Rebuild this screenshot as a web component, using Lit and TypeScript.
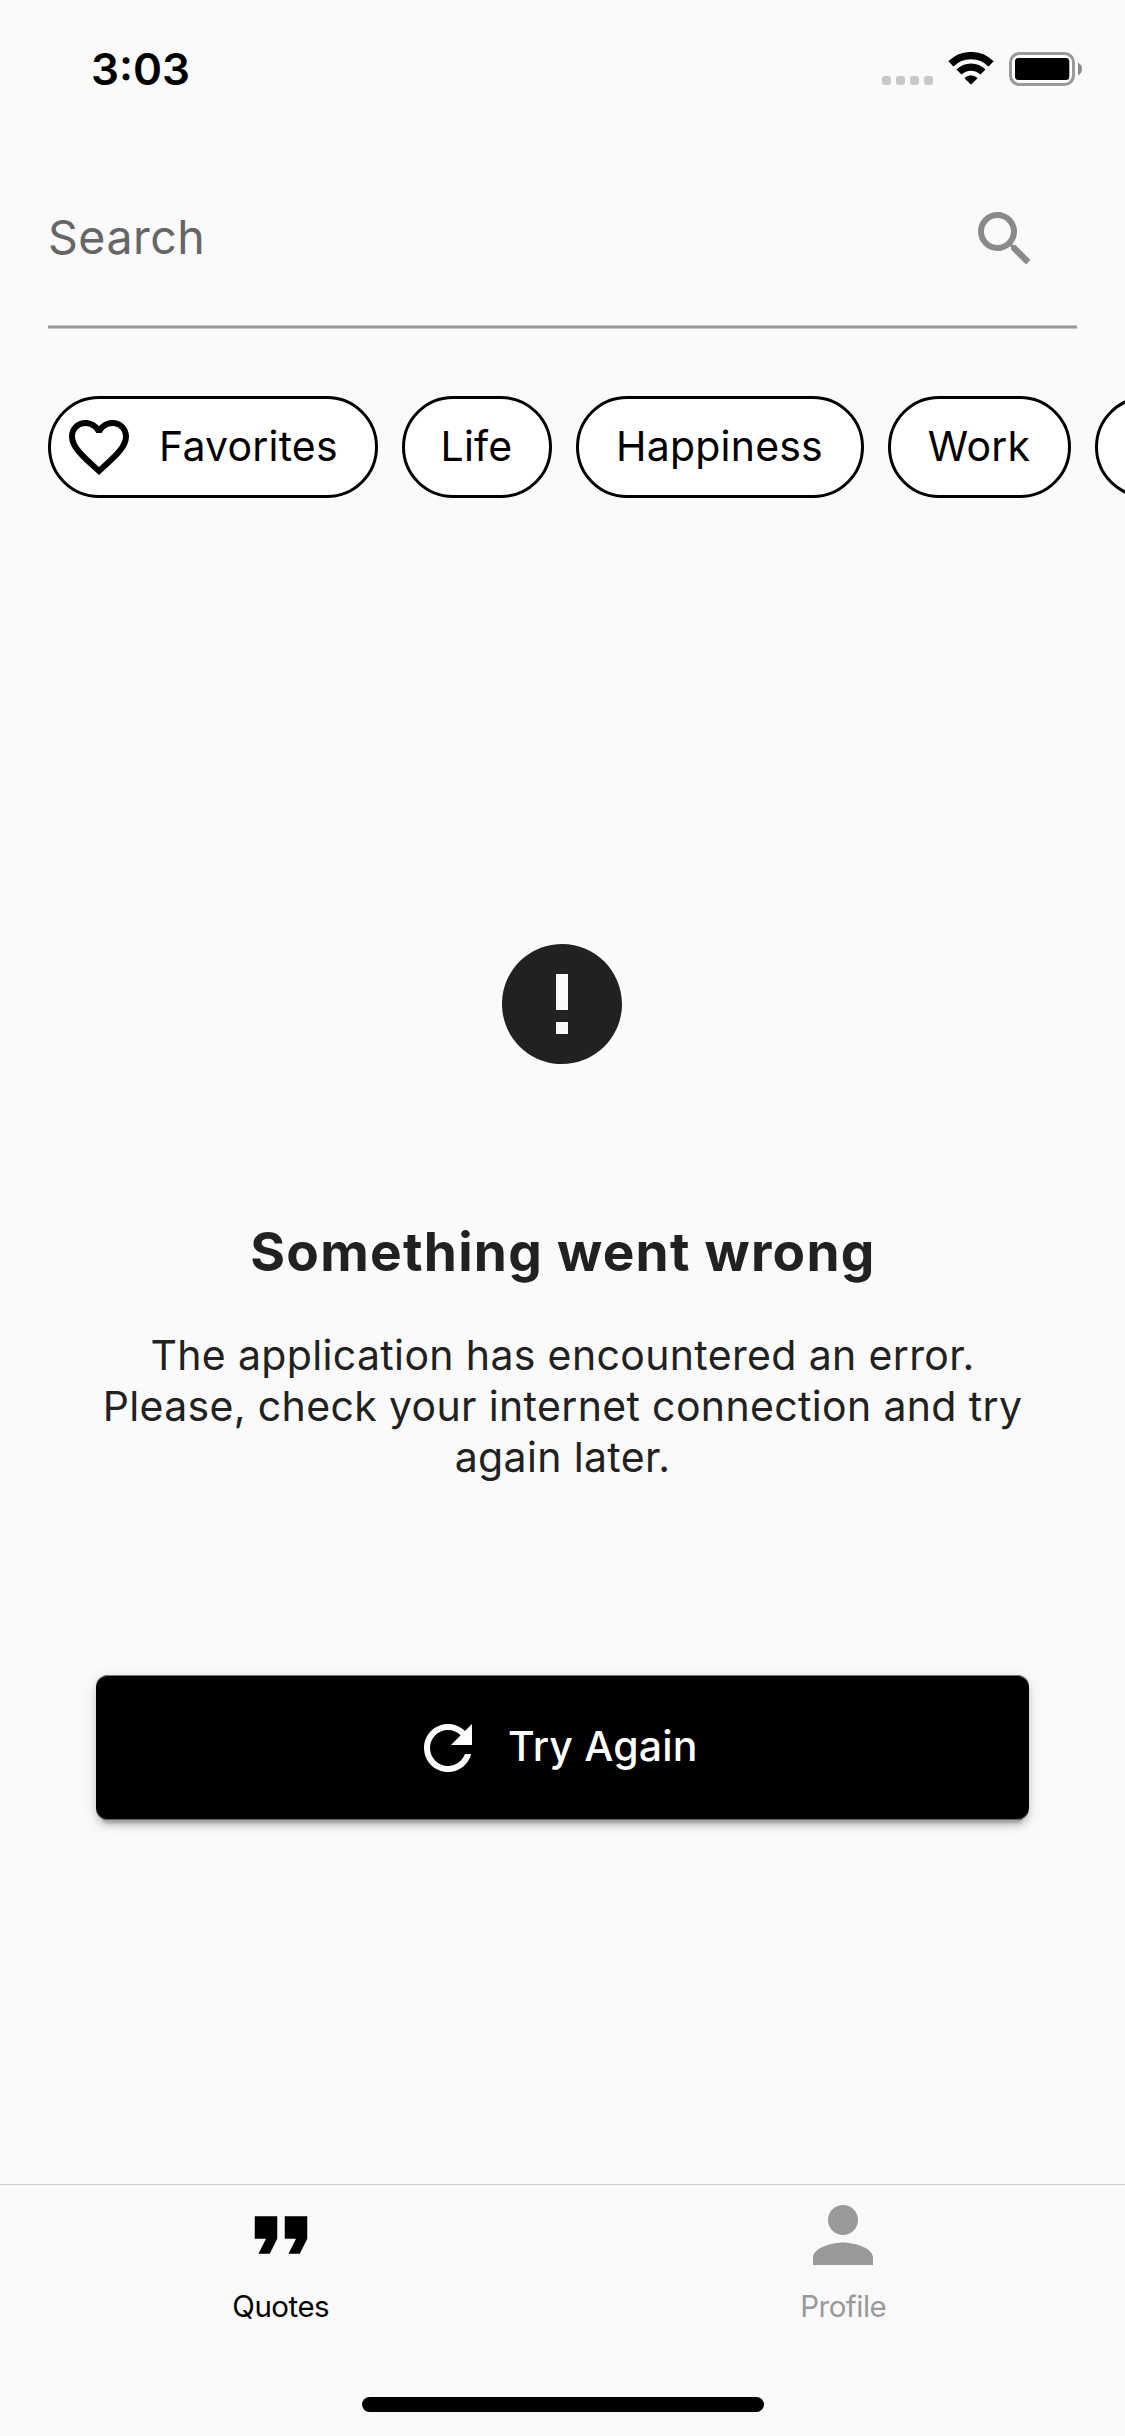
import { LitElement, html, css, svg } from "lit";
import { customElement, property } from "lit/decorators.js";

const ICONS: Record<string, string> = {
  search:
    "M15.5 14h-.79l-.28-.27A6.471 6.471 0 0 0 16 9.5 6.5 6.5 0 1 0 9.5 16c1.61 0 3.09-.59 4.23-1.57l.27.28v.79l5 4.99L20.49 19l-4.99-5zm-6 0C7.01 14 5 11.99 5 9.5S7.01 5 9.5 5 14 7.01 14 9.5 11.99 14 9.5 14z",
  heart:
    "M16.5 3c-1.74 0-3.41.81-4.5 2.09C10.91 3.81 9.24 3 7.5 3 4.42 3 2 5.42 2 8.5c0 3.78 3.4 6.86 8.55 11.54L12 21.35l1.45-1.32C18.6 15.36 22 12.28 22 8.5 22 5.42 19.58 3 16.5 3zm-4.4 15.55l-.1.1-.1-.1C7.14 14.24 4 11.39 4 8.5 4 6.5 5.5 5 7.5 5c1.54 0 3.04.99 3.57 2.36h1.87C13.46 5.99 14.96 5 16.5 5c2 0 3.5 1.5 3.5 3.5 0 2.89-3.14 5.74-7.9 10.05z",
  error:
    "M12 2C6.48 2 2 6.48 2 12s4.48 10 10 10 10-4.48 10-10S17.52 2 12 2zm1 15h-2v-2h2v2zm0-4h-2V7h2v6z",
  refresh:
    "M17.65 6.35C16.2 4.9 14.21 4 12 4c-4.42 0-7.99 3.58-7.99 8s3.57 8 7.99 8c3.73 0 6.84-2.55 7.73-6h-2.08c-.82 2.33-3.04 4-5.65 4-3.31 0-6-2.69-6-6s2.69-6 6-6c1.66 0 3.14.69 4.22 1.78L13 11h7V4l-2.35 2.35z",
  quote: "M6 17h3l2-4V7H5v6h3zm8 0h3l2-4V7h-6v6h3z",
  person:
    "M12 12c2.21 0 4-1.79 4-4s-1.79-4-4-4-4 1.79-4 4 1.79 4 4 4zm0 2c-2.67 0-8 1.34-8 4v2h16v-2c0-2.66-5.33-4-8-4z",
};

@customElement("app-icon")
export class AppIcon extends LitElement {
  static styles = css`
    :host {
      display: block;
      flex: none;
      width: 72px;
      height: 72px;
    }
    .glyph {
      display: block;
      width: 100%;
      height: 100%;
      fill: currentColor;
    }
  `;
  @property() name = "";
  render() {
    return html`<svg class="glyph" viewBox="0 0 24 24" aria-hidden="true">${svg`<path d=${ICONS[this.name]}></path>`}</svg>`;
  }
}

@customElement("status-bar")
export class StatusBar extends LitElement {
  static styles = css`
    :host {
      display: flex;
      justify-content: space-between;
      box-sizing: border-box;
      height: 150px;
      padding: 44px 43px 0 91px;
    }
    .time {
      font-size: 44px;
      font-weight: 600;
      line-height: 50px;
      letter-spacing: 0;
      color: #000;
    }
    .indicators {
      display: flex;
      align-items: flex-start;
      padding-top: 8px;
    }
    .dots {
      display: flex;
      gap: 5px;
      margin: 24px 15px 0 0;
    }
    .dot {
      width: 9px;
      height: 9px;
      border-radius: 3px;
      background: #c8c8c8;
    }
    .wifi {
      display: block;
      width: 46px;
      height: 34px;
      margin-right: 15px;
    }
    .battery {
      display: block;
      width: 73px;
      height: 34px;
    }
  `;
  render() {
    return html`
      <span class="time">3:03</span>
      <div class="indicators">
        <div class="dots">${[0, 1, 2, 3].map(() => html`<i class="dot"></i>`)}</div>
        <svg class="wifi" viewBox="0 0 46 34" aria-hidden="true">
          <path d="M2.9 11.9A28.4 28.4 0 0 1 43.1 11.9" fill="none" stroke="#000" stroke-width="7.2" />
          <path d="M11 20A17 17 0 0 1 35 20" fill="none" stroke="#000" stroke-width="7.2" />
          <path d="M16.9 26.200Q23 21.500 29.1 26.200L23 32.2z" stroke="#000" stroke-linejoin="round" stroke-width="1" />
        </svg>
        <svg class="battery" viewBox="0 0 73 34" aria-hidden="true">
          <rect x="1.5" y="1.5" width="63" height="31" rx="9" fill="#fefefe" stroke="#999" stroke-width="3" />
          <rect x="6" y="6" width="54.3" height="22" rx="3.5" fill="#000" />
          <path d="M69 10.7c5.3 2 5.3 10.6 0 12.6z" fill="#888" />
        </svg>
      </div>
    `;
  }
}

interface Category {
  label: string;
  width: number;
  icon?: string;
}

@customElement("category-chips")
export class CategoryChips extends LitElement {
  static styles = css`
    :host {
      display: flex;
      gap: 24px;
      padding: 67px 0 0 48px;
      overflow: hidden;
    }
    .chip {
      display: flex;
      flex: none;
      align-items: center;
      justify-content: center;
      box-sizing: border-box;
      height: 102px;
      border: 3px solid #000;
      border-radius: 51px;
      background: #fff;
      color: #000;
    }
    .with-icon {
      justify-content: flex-start;
      padding-left: 12px;
      gap: 24px;
    }
    .label {
      font-size: 41px;
      line-height: 50px;
      letter-spacing: 0.2px;
      padding: 0 1px 2px 0;
      white-space: nowrap;
    }
  `;
  private categories: Category[] = [
    { label: "Favorites", width: 330, icon: "heart" },
    { label: "Life", width: 150 },
    { label: "Happiness", width: 288 },
    { label: "Work", width: 183 },
    { label: "", width: 160 },
  ];
  render() {
    return this.categories.map(
      (c) => html`<div class="chip ${c.icon ? "with-icon" : ""}" style="width:${c.width}px">
        ${c.icon ? html`<app-icon name=${c.icon}></app-icon>` : ""}
        <span class="label">${c.label}</span>
      </div>`
    );
  }
}

@customElement("tab-bar")
export class TabBar extends LitElement {
  static styles = css`
    :host {
      display: flex;
      flex-direction: column;
      align-items: center;
      box-sizing: border-box;
      height: 252px;
      border-top: 1px solid #cecece;
      background: #f9f9f9;
    }
    .tabs {
      display: grid;
      grid-template-columns: 1fr 1fr;
      width: 100%;
      height: 212px;
    }
    .tab {
      display: flex;
      flex-direction: column;
      align-items: center;
      padding: 5px 1px 0 0;
      color: #999;
    }
    .active {
      color: #000;
    }
    .tab-icon {
      width: 90px;
      height: 90px;
    }
    .tab-label {
      margin-top: 8px;
      font-size: 29.5px;
      line-height: 36px;
      letter-spacing: -0.5px;
    }
    .home {
      width: 402px;
      height: 15px;
      border-radius: 8px;
      background: #000;
    }
  `;
  render() {
    return html`
      <div class="tabs">
        <div class="tab active"><app-icon class="tab-icon" name="quote"></app-icon><span class="tab-label">Quotes</span></div>
        <div class="tab"><app-icon class="tab-icon" name="person"></app-icon><span class="tab-label">Profile</span></div>
      </div>
      <div class="home"></div>
    `;
  }
}

@customElement("app-root")
export class AppRoot extends LitElement {
  static styles = css`
    :host {
      display: flex;
      flex-direction: column;
      width: 1125px;
      height: 2436px;
      overflow: hidden;
      background: #fafafa;
      color: #212121;
      font-family: Inter, "Liberation Sans", sans-serif;
    }
    .search {
      margin: 0 48px;
    }
    .search-row {
      display: flex;
      align-items: center;
      justify-content: space-between;
      height: 175px;
      padding-right: 36px;
    }
    .placeholder {
      font-size: 46.5px;
      line-height: 56px;
      letter-spacing: 0.5px;
      color: #666;
      padding-bottom: 1px;
    }
    .search-icon {
      color: #8a8a8a;
      margin-top: 3px;
    }
    .underline {
      height: 4px;
      background: linear-gradient(#c6c6c6 0 1px, #999 1px 3px, #c6c6c6 3px 4px);
    }
    .message {
      display: flex;
      flex: 1;
      flex-direction: column;
      align-items: center;
      padding: 434px 96px 0;
    }
    .error-icon {
      width: 144px;
      height: 144px;
      padding-right: 1px;
    }
    .title {
      margin: 144px 0 0;
      padding-left: 1px;
      font-size: 53.2px;
      font-weight: 700;
      line-height: 64px;
      letter-spacing: 1.25px;
    }
    .body {
      margin: 46px 0 0;
      font-size: 41px;
      line-height: 51px;
      letter-spacing: 0.35px;
      text-align: center;
    }
    .retry {
      display: flex;
      align-items: center;
      align-self: stretch;
      gap: 24px;
      box-sizing: border-box;
      height: 145px;
      margin-top: 192px;
      padding-left: 316px;
      border: 0;
      border-radius: 12px;
      background: #000;
      color: #fff;
      font-family: inherit;
      box-shadow: inset 0 1px 0 #777, inset 0 -1px 0 #666, 0 9px 3px -6px rgba(0, 0, 0, 0.2),
        0 6px 6px 0 rgba(0, 0, 0, 0.14), 0 3px 15px 0 rgba(0, 0, 0, 0.12);
    }
    .retry-label {
      font-size: 41px;
      font-weight: 500;
      line-height: 50px;
      letter-spacing: 0.2px;
      padding-bottom: 4px;
    }
  `;
  render() {
    return html`
      <status-bar></status-bar>
      <div class="search">
        <div class="search-row">
          <span class="placeholder">Search</span>
          <app-icon class="search-icon" name="search"></app-icon>
        </div>
        <div class="underline"></div>
      </div>
      <category-chips></category-chips>
      <div class="message">
        <app-icon class="error-icon" name="error"></app-icon>
        <h1 class="title">Something went wrong</h1>
        <p class="body">The application has encountered an error. Please, check your internet connection and try again later.</p>
        <button class="retry">
          <app-icon name="refresh"></app-icon>
          <span class="retry-label">Try Again</span>
        </button>
      </div>
      <tab-bar></tab-bar>
    `;
  }
}
